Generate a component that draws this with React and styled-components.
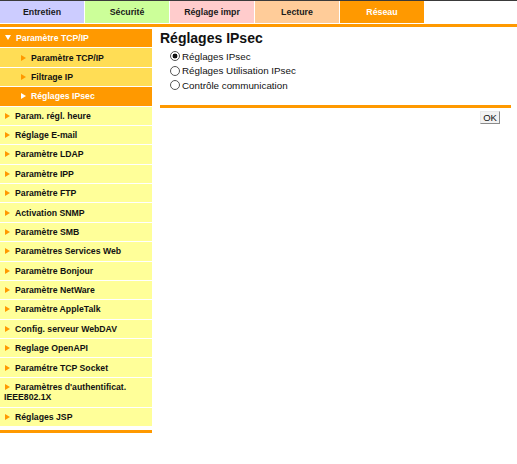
import React from 'react';
import styled, { createGlobalStyle } from 'styled-components';

const GlobalStyle = createGlobalStyle`
  html, body {
    margin: 0;
    padding: 0;
    background: #ffffff;
  }
  body {
    font-family: 'Liberation Sans', Arial, sans-serif;
  }
`;

const tabs = [
  { label: 'Entretien', bg: '#ccccff' },
  { label: 'Sécurité', bg: '#ccff99' },
  { label: 'Réglage impr', bg: '#ffcccc' },
  { label: 'Lecture', bg: '#ffcc99' },
  { label: 'Réseau', bg: '#ff9900', active: true },
];

const subItems = [
  { label: 'Paramètre TCP/IP' },
  { label: 'Filtrage IP' },
  { label: 'Réglages IPsec', active: true },
];

const menuItems = [
  'Param. régl. heure',
  'Réglage E-mail',
  'Paramètre LDAP',
  'Paramètre IPP',
  'Paramètre FTP',
  'Activation SNMP',
  'Paramètre SMB',
  'Paramètres Services Web',
  'Paramètre Bonjour',
  'Paramètre NetWare',
  'Paramètre AppleTalk',
  'Config. serveur WebDAV',
  'Reglage OpenAPI',
  'Paramétre TCP Socket',
  "Paramètres d'authentificat. IEEE802.1X",
  'Réglages JSP',
];

const options = [
  { label: 'Réglages IPsec', checked: true },
  { label: 'Réglages Utilisation IPsec' },
  { label: 'Contrôle communication' },
];

const App = () => {
  return (
    <Page>
      <GlobalStyle />
      <TabBar>
        {tabs.map((t) => (
          <Tab key={t.label} bg={t.bg} active={t.active}>
            {t.label}
          </Tab>
        ))}
      </TabBar>
      <OrangeRule />
      <Main>
        <Sidebar>
          <MenuList>
            <MenuRow variant="open">
              <DownArrow />
              Paramètre TCP/IP
            </MenuRow>
            {subItems.map((s) => (
              <MenuRow key={s.label} variant={s.active ? 'active' : 'sub'} indent>
                <Arrow light={s.active} />
                {s.label}
              </MenuRow>
            ))}
            {menuItems.map((m) => (
              <MenuRow key={m} variant="plain">
                <Arrow />
                {m}
              </MenuRow>
            ))}
          </MenuList>
          <SideFooter />
        </Sidebar>
        <Content>
          <Title>Réglages IPsec</Title>
          <OptionList>
            {options.map((o) => (
              <Option key={o.label}>
                <Radio checked={o.checked} />
                {o.label}
              </Option>
            ))}
          </OptionList>
          <ContentRule />
          <Actions>
            <OkButton>OK</OkButton>
          </Actions>
        </Content>
      </Main>
    </Page>
  );
};

export default App;

const Page = styled.div`
  width: 517px;
  height: 464px;
  border-top: 1px solid #3a3a3a;
  box-sizing: border-box;
  background: #ffffff;
  overflow: hidden;
`;

const TabBar = styled.div`
  display: flex;
  gap: 1px;
  height: 22px;
`;

const Tab = styled.div`
  width: 84px;
  height: 22px;
  background: ${(p) => p.bg};
  color: ${(p) => (p.active ? '#ffffff' : '#1a1a1a')};
  font-size: 8.8px;
  font-weight: 700;
  display: flex;
  align-items: center;
  justify-content: center;
  padding-bottom: 1px;
  box-sizing: border-box;
`;

const OrangeRule = styled.div`
  height: 3px;
  margin-top: 1px;
  background: #ff9900;
`;

const Main = styled.div`
  display: flex;
  align-items: flex-start;
  margin-top: 2px;
`;

const Sidebar = styled.div`
  width: 152px;
  display: flex;
  flex-direction: column;
`;

const MenuList = styled.div`
  display: flex;
  flex-direction: column;
`;

const rowBg = {
  open: '#ff9900',
  active: '#ff9900',
  sub: '#ffdd55',
  plain: '#ffff99',
};

const MenuRow = styled.div`
  background: ${(p) => rowBg[p.variant]};
  color: ${(p) => (p.variant === 'open' || p.variant === 'active' ? '#ffffff' : '#111111')};
  font-size: 8.7px;
  font-weight: 700;
  line-height: 10.5px;
  padding: 4.2px 4px 3.7px ${(p) => (p.indent ? '20px' : '4px')};
  border-bottom: 1px solid #ffffff;
`;

const Arrow = styled.span`
  display: inline-block;
  width: 0;
  height: 0;
  border-top: 3px solid transparent;
  border-bottom: 3px solid transparent;
  border-left: 5px solid ${(p) => (p.light ? '#ffffff' : '#ff9900')};
  margin-left: 1px;
  margin-right: 5px;
  vertical-align: 0px;
`;

const DownArrow = styled.span`
  display: inline-block;
  width: 0;
  height: 0;
  border-left: 3px solid transparent;
  border-right: 3px solid transparent;
  border-top: 5px solid #ffffff;
  margin-left: 1px;
  margin-right: 5px;
  vertical-align: 1px;
`;

const SideFooter = styled.div`
  height: 3px;
  margin-top: 3px;
  background: #ff9900;
`;

const Content = styled.div`
  width: 351px;
  margin-left: 8px;
  display: flex;
  flex-direction: column;
`;

const Title = styled.div`
  font-size: 14px;
  font-weight: 700;
  color: #111111;
  line-height: 16px;
  padding-top: 1px;
`;

const OptionList = styled.div`
  display: flex;
  flex-direction: column;
  margin-top: 3px;
  padding-left: 10px;
`;

const Option = styled.div`
  display: flex;
  align-items: center;
  height: 14.5px;
  font-size: 9.8px;
  color: #111111;
`;

const Radio = styled.span`
  width: 8px;
  height: 8px;
  border: 1px solid #555555;
  border-radius: 50%;
  margin-right: 2px;
  background: ${(p) =>
    p.checked ? 'radial-gradient(circle, #111111 0 2.2px, #ffffff 2.7px)' : '#ffffff'};
  flex-shrink: 0;
`;

const ContentRule = styled.div`
  height: 3px;
  margin-top: 12px;
  background: #ff9900;
`;

const Actions = styled.div`
  display: flex;
  justify-content: flex-end;
  padding-right: 11px;
  margin-top: 3px;
`;

const OkButton = styled.div`
  width: 20px;
  height: 13px;
  box-sizing: border-box;
  border: 1px solid;
  border-color: #e8e8e8 #8a8a8a #8a8a8a #e8e8e8;
  background: #f2f2f2;
  font-size: 9.5px;
  color: #111111;
  display: flex;
  align-items: center;
  justify-content: center;
`;
